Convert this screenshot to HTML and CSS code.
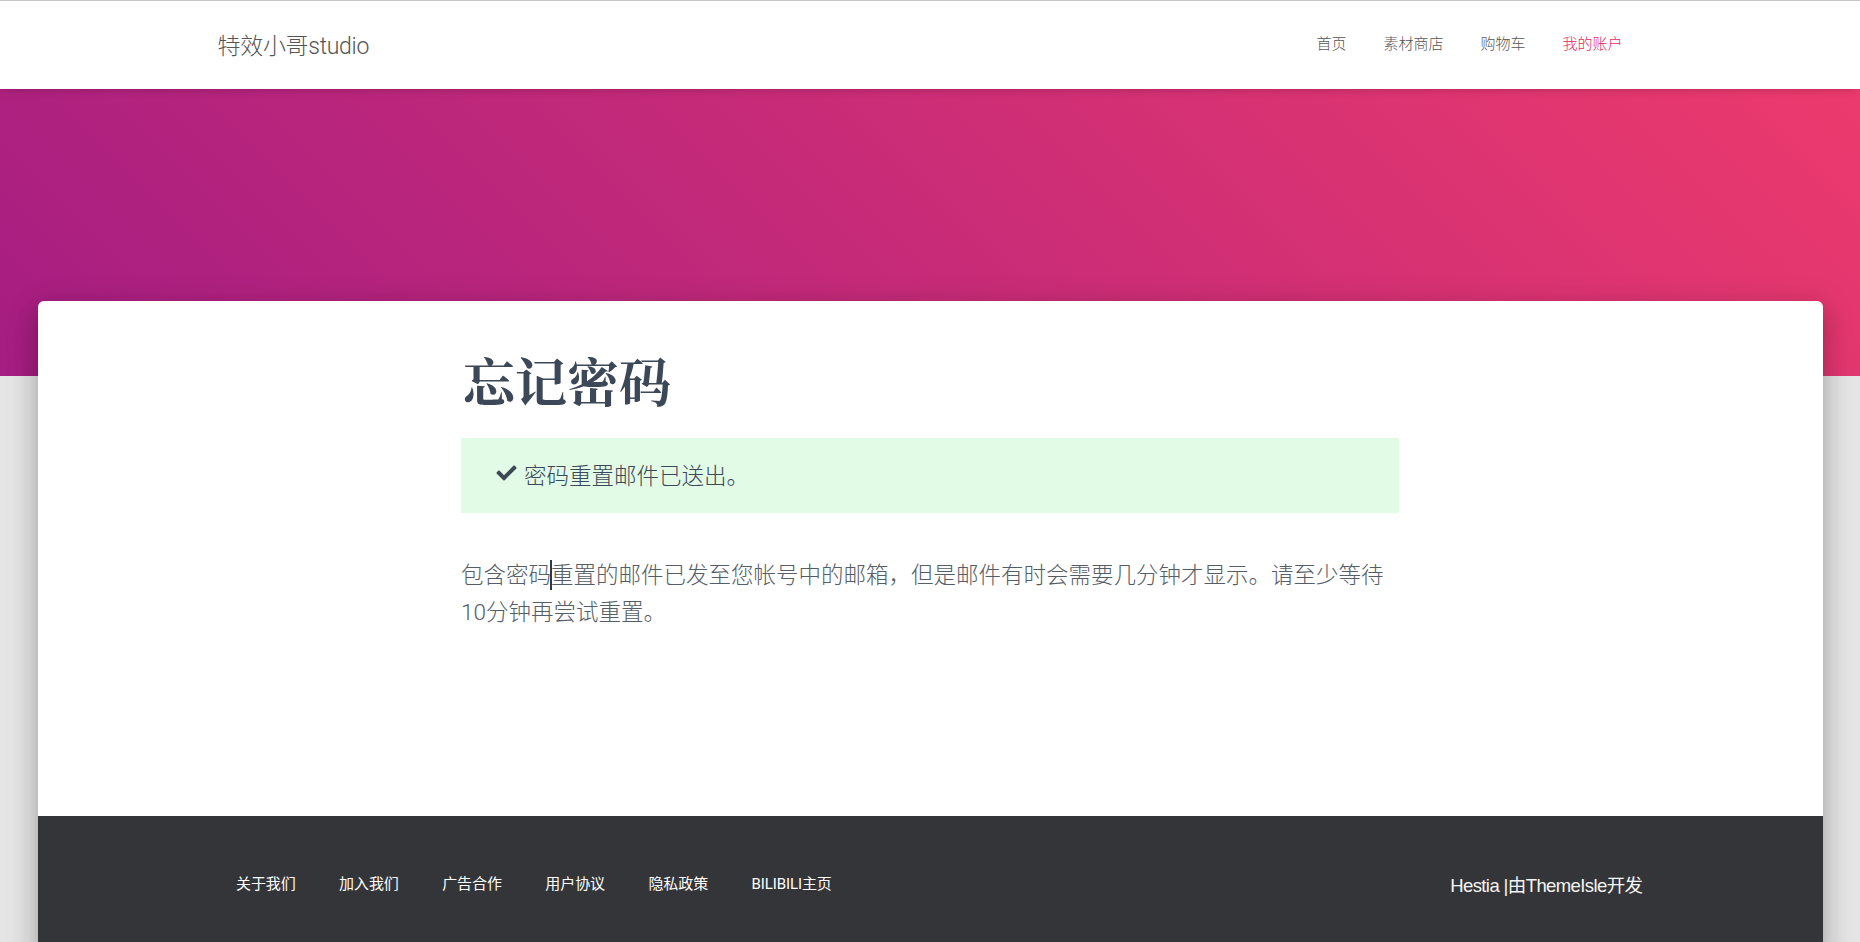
FILE: index.html
```html
<!DOCTYPE html>
<html lang="zh-CN">
<head>
<meta charset="utf-8">
<title>忘记密码 – 特效小哥studio</title>
<link rel="stylesheet" href="styles.css">
</head>
<body>
<header class="navbar">
  <div class="container nav-inner">
    <a class="brand" href="#">特效小哥studio</a>
    <nav class="menu">
      <a href="#">首页</a>
      <a href="#">素材商店</a>
      <a href="#">购物车</a>
      <a href="#" class="active">我的账户</a>
    </nav>
  </div>
</header>
<div class="hero"></div>
<div class="main-raised">
  <section class="content">
    <div class="column">
      <h1 class="title">忘记密码</h1>
      <div class="notice">
        <svg class="check" viewBox="0 0 512 512" aria-hidden="true"><path d="M173.9 439.4l-166.4-166.4c-10-10-10-26.2 0-36.2l36.2-36.2c10-10 26.2-10 36.2 0L192 312.7 432.1 72.6c10-10 26.2-10 36.2 0l36.2 36.2c10 10 10 26.2 0 36.2l-294.4 294.4c-10 10-26.2 10-36.2 0z"/></svg>
        <span>密码重置邮件已送出。</span>
      </div>
      <p class="info">包含密码重置的邮件已发至您帐号中的邮箱，但是邮件有时会需要几分钟才显示。请至少等待10分钟再尝试重置。</p>
    </div>
  </section>
  <footer class="footer">
    <div class="container footer-inner">
      <nav class="footer-menu">
        <a href="#">关于我们</a>
        <a href="#">加入我们</a>
        <a href="#">广告合作</a>
        <a href="#">用户协议</a>
        <a href="#">隐私政策</a>
        <a href="#">BILIBILI主页</a>
      </nav>
      <div class="copyright">Hestia |由ThemeIsle开发</div>
    </div>
  </footer>
</div>
</body>
</html>
```

FILE: styles.css
```css
* { box-sizing: border-box; }
html, body { margin: 0; padding: 0; }
body {
  background: #e5e5e5;
  font-family: Roboto, "Noto Sans CJK SC", "Liberation Sans", sans-serif;
  color: #3c4858;
  overflow: hidden;
  height: 942px;
}
a { text-decoration: none; color: inherit; }

.container {
  width: 1462.5px;
  margin: 0 auto;
  padding: 0 18.75px;
}

.navbar {
  position: relative;
  z-index: 2;
  background: #fff;
  border-top: 1px solid #c6c6c6;
  height: 89px;
  box-shadow: 0 2px 10px -4px rgba(0,0,0,.35);
}
.nav-inner {
  display: flex;
  align-items: center;
  justify-content: space-between;
  height: 86px;
}
.brand {
  font-size: 23px;
  font-weight: 300;
  color: #555;
  letter-spacing: -0.3px;
}
.menu { display: flex; }
.menu a {
  font-size: 15px;
  font-weight: 300;
  color: #555;
  padding: 0 18.5px;
  line-height: 20px;
}
.menu a:last-child { padding-right: 20px; }
.menu a.active { color: #e91e63; }

.hero {
  height: 287px;
  background: linear-gradient(45deg, #a51d82 0%, #ec3a6d 100%);
}

.main-raised {
  position: relative;
  margin: -75px 37.5px 0;
  background: #fff;
  border-radius: 6px 6px 0 0;
  box-shadow: 0 16px 24px 2px rgba(0,0,0,.14), 0 6px 30px 5px rgba(0,0,0,.12), 0 8px 10px -5px rgba(0,0,0,.2);
  overflow: hidden;
}

.content { padding: 47px 0 0; height: 515px; }
.column {
  width: 937.5px;
  margin-left: 423.5px;
}
.title {
  margin: 0;
  font-family: "Noto Serif CJK SC", "Noto Serif CJK JP", "Liberation Serif", "Noto Sans CJK SC", serif;
  font-size: 52px;
  font-weight: 700;
  line-height: 64px;
  color: #3c4858;
  padding-left: 2px;
}
.notice {
  margin-top: 26px;
  height: 75px;
  background: #e2fbe6;
  display: flex;
  align-items: center;
  padding-left: 34px;
  font-size: 22.5px;
  font-weight: 300;
  color: #3c4858;
}
.notice span { margin-top: -3px; }
.check {
  width: 23px;
  height: 20px;
  fill: #3c4858;
  margin-right: 6px;
  margin-top: -5px;
}
.info {
  margin: 44px 0 0;
  font-size: 22.5px;
  font-weight: 300;
  line-height: 37px;
  color: #555d66;
  /* text caret drawn over the first line */
  background-image: linear-gradient(#2b3a4a, #2b3a4a);
  background-size: 2px 30px;
  background-position: 89px 3px;
  background-repeat: no-repeat;
}

.footer {
  background: #343538;
  height: 140px;
  color: #fff;
}
.footer-inner {
  display: flex;
  align-items: center;
  justify-content: space-between;
  height: 140px;
  padding-bottom: 7px;
}
.footer-menu { display: flex; }
.footer-menu a {
  font-size: 15px;
  font-weight: 400;
  color: #fff;
  padding: 0 25px 0 18.5px;
  letter-spacing: -0.1px;
}
.copyright {
  font-family: "Liberation Sans", "Noto Sans CJK SC", sans-serif;
  font-size: 18.5px;
  letter-spacing: -0.6px;
  color: #f4f4f4;
  margin-top: 3px;
}
```
